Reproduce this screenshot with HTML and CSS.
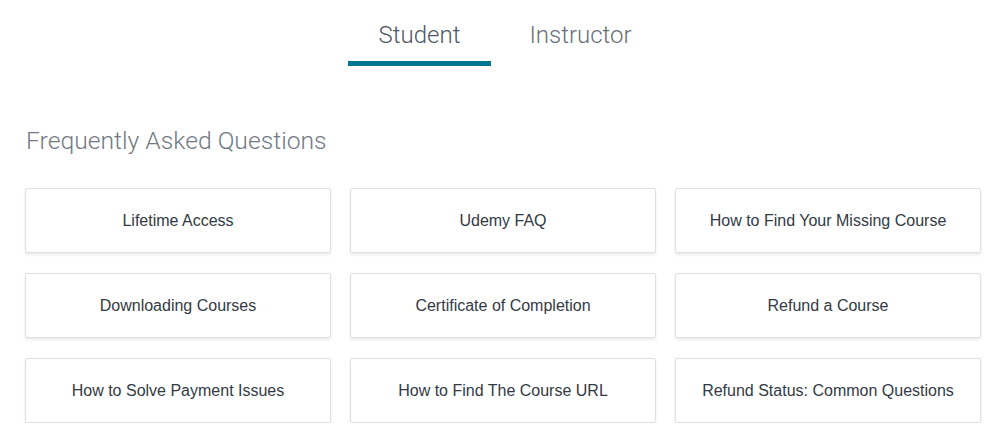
FILE: index.html
```html
<!DOCTYPE html>
<html>
<head>
<meta charset="utf-8">
<link rel="stylesheet" href="styles.css">
</head>
<body>
<div class="page">
  <nav class="tabs">
    <div class="tab active">Student</div>
    <div class="tab">Instructor</div>
  </nav>
  <h2 class="title">Frequently Asked Questions</h2>
  <div class="grid">
    <div class="card">Lifetime Access</div>
    <div class="card">Udemy FAQ</div>
    <div class="card">How to Find Your Missing Course</div>
    <div class="card">Downloading Courses</div>
    <div class="card">Certificate of Completion</div>
    <div class="card">Refund a Course</div>
    <div class="card">How to Solve Payment Issues</div>
    <div class="card">How to Find The Course URL</div>
    <div class="card">Refund Status: Common Questions</div>
  </div>
</div>
</body>
</html>
```
FILE: styles.css
```css
html, body {
  margin: 0;
  padding: 0;
  background: #fff;
}
body {
  font-family: "Liberation Sans", Arial, sans-serif;
  color: #29303b;
}
.page {
  width: 956px;
  margin: 0 0 0 25px;
}
.tabs {
  display: flex;
  justify-content: center;
  gap: 18px;
  padding-top: 20px;
  padding-right: 6px;
}
.tab {
  width: 143px;
  text-align: center;
  font-family: Roboto, "Liberation Sans", sans-serif;
  font-weight: 300;
  font-size: 24px;
  line-height: 30px;
  color: #686f7a;
  padding-bottom: 11px;
  border-bottom: 5px solid transparent;
}
.tab.active {
  color: #505763;
  border-bottom-color: #007791;
}
.title {
  margin: 60px 0 0 1px;
  font-family: Roboto, "Liberation Sans", sans-serif;
  font-weight: 300;
  font-size: 24.7px;
  line-height: 30px;
  color: #737a84;
}
.grid {
  display: grid;
  grid-template-columns: repeat(3, 1fr);
  column-gap: 19px;
  row-gap: 20px;
  margin-top: 32px;
}
.card {
  height: 63px;
  border: 1px solid #dedfe0;
  border-radius: 2px;
  box-shadow: 0 2px 3px rgba(0,0,0,0.08);
  display: flex;
  align-items: center;
  justify-content: center;
  font-size: 16px;
  color: #333a44;
}
```
